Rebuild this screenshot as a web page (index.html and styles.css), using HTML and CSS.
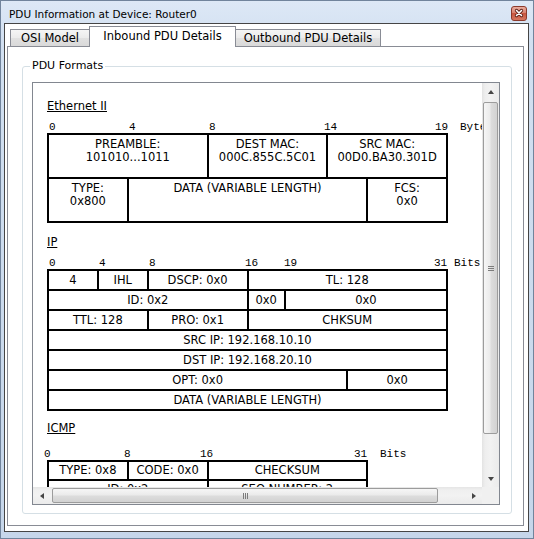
FILE: index.html
```html
<!DOCTYPE html>
<html>
<head>
<meta charset="utf-8">
<title>PDU Information at Device: Router0</title>
<link rel="stylesheet" href="styles.css">
</head>
<body>
<div class="window">
  <div class="titlebar">
    <span class="title">PDU Information at Device: Router0</span>
    <div class="close">
      <svg width="16" height="15" viewBox="0 0 16 15">
        <defs>
          <linearGradient id="cg" x1="0" y1="0" x2="0" y2="1">
            <stop offset="0" stop-color="#eab0a2"/>
            <stop offset="0.45" stop-color="#d8826f"/>
            <stop offset="0.5" stop-color="#c8563f"/>
            <stop offset="1" stop-color="#d67a62"/>
          </linearGradient>
        </defs>
        <rect x="0.5" y="0.5" width="15" height="14" rx="2.5" fill="url(#cg)" stroke="#8b3a2c"/>
        <path d="M5.5 4.5 L10.5 9.5 M10.5 4.5 L5.5 9.5" stroke="#5a1f16" stroke-width="3.2" stroke-linecap="round"/>
        <path d="M5.5 4.5 L10.5 9.5 M10.5 4.5 L5.5 9.5" stroke="#ffffff" stroke-width="1.6" stroke-linecap="round"/>
      </svg>
    </div>
  </div>
  <div class="client">
    <div class="tabs">
      <div class="tab tab-osi">OSI Model</div>
      <div class="tab tab-in active">Inbound PDU Details</div>
      <div class="tab tab-out">Outbound PDU Details</div>
    </div>
    <div class="panel">
      <div class="group">
        <span class="group-label">PDU Formats</span>
        <div class="pane">
          <div class="viewport">
            <div class="content">
              <div class="pdu-title">Ethernet II</div>
              <div class="ruler">
                <span style="left:2px">0</span>
                <span style="left:82px">4</span>
                <span style="left:162px">8</span>
                <span style="left:277px">14</span>
                <span style="left:388px">19</span>
                <span style="left:413px">Bytes</span>
              </div>
              <div class="frame eth">
                <div class="s8">PREAMBLE:<br>101010...1011</div>
                <div class="s6">DEST MAC:<br>000C.855C.5C01</div>
                <div class="s6">SRC MAC:<br>00D0.BA30.301D</div>
                <div class="s4">TYPE:<br>0x800</div>
                <div class="s12">DATA (VARIABLE LENGTH)</div>
                <div class="s4">FCS:<br>0x0</div>
              </div>

              <div class="pdu-title ip-title">IP</div>
              <div class="ruler">
                <span style="left:2px">0</span>
                <span style="left:52px">4</span>
                <span style="left:102px">8</span>
                <span style="left:198px">16</span>
                <span style="left:237px">19</span>
                <span style="left:387px">31</span>
                <span style="left:407px">Bits</span>
              </div>
              <div class="frame ip">
                <div class="s4">4</div>
                <div class="s4">IHL</div>
                <div class="s8">DSCP: 0x0</div>
                <div class="s16">TL: 128</div>
                <div class="s16">ID: 0x2</div>
                <div class="s3">0x0</div>
                <div class="s13">0x0</div>
                <div class="s8">TTL: 128</div>
                <div class="s8">PRO: 0x1</div>
                <div class="s16">CHKSUM</div>
                <div class="s32">SRC IP: 192.168.10.10</div>
                <div class="s32">DST IP: 192.168.20.10</div>
                <div class="s24">OPT: 0x0</div>
                <div class="s8">0x0</div>
                <div class="s32">DATA (VARIABLE LENGTH)</div>
              </div>

              <div class="pdu-title icmp-title">ICMP</div>
              <div class="ruler icmp-ruler">
                <span style="left:-3px">0</span>
                <span style="left:77px">8</span>
                <span style="left:153px">16</span>
                <span style="left:307px">31</span>
                <span style="left:333px">Bits</span>
              </div>
              <div class="frame icmp">
                <div class="s8">TYPE: 0x8</div>
                <div class="s8">CODE: 0x0</div>
                <div class="s16">CHECKSUM</div>
                <div class="s16">ID: 0x2</div>
                <div class="s16">SEQ NUMBER: 2</div>
              </div>
            </div>
          </div>
          <div class="vbar">
            <div class="vbtn"><span class="arr-up"></span></div>
            <div class="vtrack"><div class="vthumb"><span class="grip-v"></span></div></div>
            <div class="vbtn"><span class="arr-down"></span></div>
          </div>
          <div class="hbar">
            <div class="hbtn"><span class="arr-left"></span></div>
            <div class="htrack"><div class="hthumb"><span class="grip-h"></span></div></div>
            <div class="hbtn"><span class="arr-right"></span></div>
          </div>
          <div class="corner"></div>
        </div>
      </div>
    </div>
  </div>
</div>
</body>
</html>
```
FILE: styles.css
```css
* { box-sizing: border-box; }
html, body { margin: 0; padding: 0; }
body {
  width: 534px;
  height: 539px;
  overflow: hidden;
  background: #fff;
  font-family: "DejaVu Sans", Verdana, sans-serif;
  color: #000;
}

.window {
  width: 534px;
  height: 539px;
  display: flex;
  flex-direction: column;
  border: 1px solid #71849c;
  background: linear-gradient(180deg, #dde8f6 0, #d2e0f1 40px, #c6d6ea 100%);
}

.titlebar {
  height: 22px;
  flex: none;
  display: flex;
  justify-content: space-between;
  align-items: flex-start;
  padding: 0 6px 0 8px;
}
.title {
  font-size: 10.5px;
  line-height: 14px;
  margin-top: 6px;
  white-space: nowrap;
}
.close { width: 16px; height: 15px; margin-top: 5px; }
.close svg { display: block; }

.client {
  flex: none;
  height: 509px;
  margin: 0 4px 0 3px;
  border: 1px solid #454545;
  background: #fff;
  display: flex;
  flex-direction: column;
  padding: 2px 4px 5px 2px;
}

.tabs {
  height: 20px;
  flex: none;
  display: flex;
  align-items: flex-end;
  padding-left: 3px;
}
.tab {
  height: 17px;
  border: 1px solid #898c95;
  border-bottom: none;
  font-size: 11.5px;
  line-height: 16px;
  text-align: center;
  white-space: nowrap;
  background: linear-gradient(#f5f5f5, #ebebeb 50%, #e1e1e1 50%, #d9d9d9);
}
.tab-osi { width: 80px; }
.tab-in { width: 147px; margin-left: -1px; }
.tab-out { width: 146px; margin-left: -1px; }
.tab.active {
  height: 21px;
  margin-bottom: -1px;
  line-height: 19px;
  background: #fff;
  position: relative;
  z-index: 1;
}

.panel {
  flex: none;
  height: 480px;
  border: 1px solid #898c95;
  background: #fff;
  padding: 19px 11px 11px 14px;
  display: flex;
}

.group {
  flex: 1;
  position: relative;
  border: 1px solid #d5dfe5;
  border-radius: 3px;
  padding: 15px 11px 8px 9px;
  display: flex;
}
.group-label {
  position: absolute;
  left: 7px;
  top: -8px;
  padding: 0 2px;
  background: #fff;
  font-size: 11px;
  line-height: 14px;
  white-space: nowrap;
}

.pane {
  flex: 1;
  border: 1px solid #828790;
  display: grid;
  grid-template-columns: minmax(0, 1fr) 17px;
  grid-template-rows: minmax(0, 1fr) 17px;
}

.viewport {
  overflow: hidden;
  background: #fff;
}
.content {
  width: 600px;
  padding: 16px 0 0 14px;
}

.pdu-title {
  font-size: 11.5px;
  line-height: 14px;
  height: 14px;
  text-decoration: underline;
}
.ip-title { margin-top: 12px; }
.icmp-title { margin-top: 10px; }

.ruler {
  position: relative;
  height: 12px;
  margin-top: 8px;
  font-family: "Liberation Mono", "Courier New", monospace;
  font-size: 11px;
  line-height: 12px;
}
.ruler span { position: absolute; top: 0; white-space: nowrap; }
.icmp-ruler { margin-top: 13px; }

.frame {
  display: grid;
  background: #000;
  padding: 2px;
  gap: 2px;
}
.frame > div {
  background: #fff;
  text-align: center;
  white-space: nowrap;
  overflow: hidden;
  font-size: 11.5px;
}
.eth {
  width: 401px;
  grid-template-columns: repeat(20, minmax(0, 1fr));
  grid-auto-rows: 42px;
}
.eth > div { line-height: 13px; padding-top: 3px; }
.ip {
  width: 401px;
  grid-template-columns: repeat(32, minmax(0, 1fr));
  grid-auto-rows: 18px;
}
.ip > div { line-height: 18px; }
.icmp {
  width: 321px;
  grid-template-columns: repeat(32, minmax(0, 1fr));
  grid-auto-rows: 17px;
}
.icmp > div { line-height: 17px; }

.s3 { grid-column: span 3; }
.s4 { grid-column: span 4; }
.s6 { grid-column: span 6; }
.s8 { grid-column: span 8; }
.s12 { grid-column: span 12; }
.s13 { grid-column: span 13; }
.s16 { grid-column: span 16; }
.s24 { grid-column: span 24; }
.s32 { grid-column: span 32; }

/* scrollbars */
.vbar {
  display: flex;
  flex-direction: column;
  background: linear-gradient(90deg, #e3e3e3, #eeeeee 3px, #f2f2f2 50%, #ebebeb);
}
.vbtn {
  height: 17px;
  flex: none;
  display: flex;
  align-items: center;
  justify-content: center;
}
.vtrack { flex: 1; padding: 2px 1px 0; }
.vthumb {
  height: 332px;
  border: 1px solid #9c9c9c;
  border-radius: 2px;
  background: linear-gradient(90deg, #f6f6f6, #ebebeb 45%, #dcdcdc 55%, #d2d2d2);
  display: flex;
  align-items: center;
  justify-content: center;
}
.grip-v {
  width: 6px;
  height: 5px;
  background: repeating-linear-gradient(180deg, #7c7c7c 0 1px, transparent 1px 2px);
}

.hbar {
  display: flex;
  background: linear-gradient(180deg, #e5e5e5, #efefef 3px, #f2f2f2 50%, #ebebeb);
}
.hbtn {
  width: 17px;
  flex: none;
  display: flex;
  align-items: center;
  justify-content: center;
}
.htrack { flex: 1; padding: 1px 0 0 2px; }
.hthumb {
  width: 386px;
  height: 15px;
  border: 1px solid #9c9c9c;
  border-radius: 2px;
  background: linear-gradient(180deg, #f6f6f6, #ebebeb 45%, #dcdcdc 55%, #d2d2d2);
  display: flex;
  align-items: center;
  justify-content: center;
}
.grip-h {
  width: 5px;
  height: 6px;
  background: repeating-linear-gradient(90deg, #7c7c7c 0 1px, transparent 1px 2px);
}
.corner { background: #f0f0f0; }

.arr-up, .arr-down, .arr-left, .arr-right { width: 0; height: 0; }
.arr-up {
  border-left: 3.5px solid transparent;
  border-right: 3.5px solid transparent;
  border-bottom: 4px solid #464646;
}
.arr-down {
  border-left: 3.5px solid transparent;
  border-right: 3.5px solid transparent;
  border-top: 4px solid #464646;
}
.arr-left {
  border-top: 3.5px solid transparent;
  border-bottom: 3.5px solid transparent;
  border-right: 4px solid #464646;
}
.arr-right {
  border-top: 3.5px solid transparent;
  border-bottom: 3.5px solid transparent;
  border-left: 4px solid #464646;
}
```
